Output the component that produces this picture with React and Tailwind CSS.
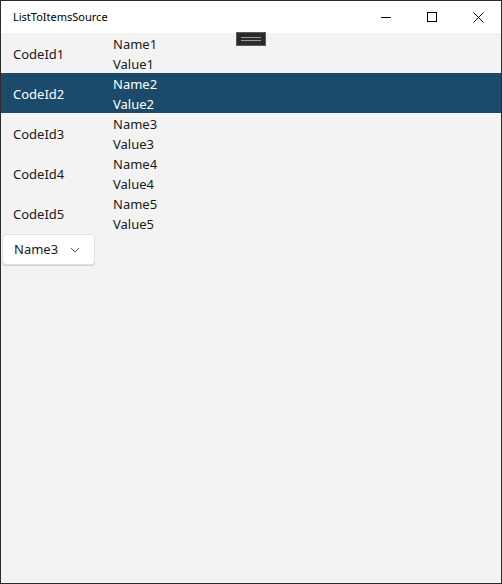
import React from "react";

const rows = [1, 2, 3, 4, 5];

const App = () => {
  return (
    <div
      className="w-[502px] h-[584px] border border-[#2b2b2b] bg-[#f3f3f3] flex flex-col relative"
      style={{ fontFamily: '"Noto Sans", "Open Sans", sans-serif' }}
    >
      <div className="h-[32px] bg-white flex items-center justify-between shrink-0">
        <span className="pl-3 text-[11px] text-black">ListToItemsSource</span>
        <div className="flex h-full">
          <div className="w-[46px] h-full flex items-center justify-center">
            <svg width="10" height="10" viewBox="0 0 10 10">
              <path d="M0 5.5h10" stroke="#000" strokeWidth="1" />
            </svg>
          </div>
          <div className="w-[46px] h-full flex items-center justify-center">
            <svg width="10" height="10" viewBox="0 0 10 10">
              <rect x="0.5" y="0.5" width="9" height="9" fill="none" stroke="#000" strokeWidth="1" />
            </svg>
          </div>
          <div className="w-[46px] h-full flex items-center justify-center">
            <svg width="11" height="11" viewBox="0 0 11 11">
              <path d="M0.5 0.5l10 10M10.5 0.5l-10 10" stroke="#000" strokeWidth="1" />
            </svg>
          </div>
        </div>
      </div>

      <div className="flex flex-col">
        {rows.map((n) => (
          <div
            key={n}
            className={
              n === 2
                ? "h-[40px] flex items-center bg-[#1b4a6b] text-white text-[13px]"
                : "h-[40px] flex items-center text-[#1a1a1a] text-[13px]"
            }
          >
            <span className="w-[112px] pl-3 pt-[4px]">CodeId{n}</span>
            <div className="flex flex-col leading-[20px] pt-[2px]">
              <span>Name{n}</span>
              <span>Value{n}</span>
            </div>
          </div>
        ))}
      </div>

      <div className="pl-[1px] pt-[1px]">
        <div className="w-[93px] h-[31px] bg-white border border-[#e3e3e3] rounded-[4px] flex items-center justify-between pl-[11px] pr-[14px] text-[13px] text-[#1a1a1a] shadow-[0_1px_0_#d0d0d0]">
          <span>Name3</span>
          <svg width="10" height="6" viewBox="0 0 10 6">
            <path d="M1 1l4 4 4-4" fill="none" stroke="#555" strokeWidth="1" />
          </svg>
        </div>
      </div>

      <div className="absolute left-[235px] top-[31px] w-[30px] h-[14px] bg-[#2b2b2b] border border-[#5a5a5a] flex flex-col items-center justify-center gap-[2px]">
        <div className="w-[20px] h-[1px] bg-[#9a9a9a]" />
        <div className="w-[20px] h-[1px] bg-[#9a9a9a]" />
      </div>
    </div>
  );
};

export default App;
